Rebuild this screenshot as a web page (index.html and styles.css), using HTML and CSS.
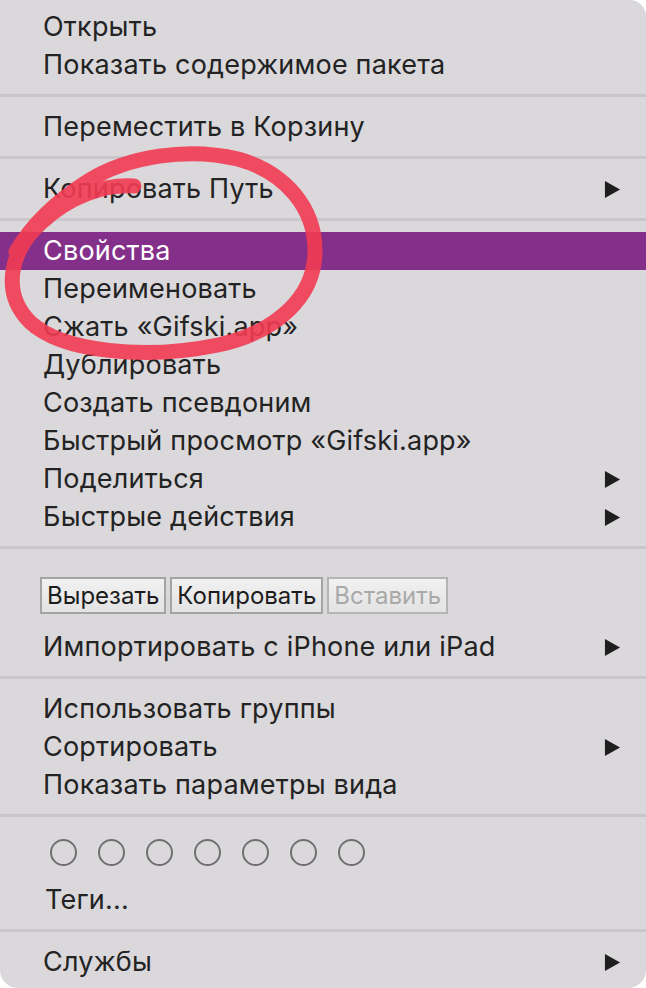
FILE: index.html
```html
<!DOCTYPE html>
<html lang="ru">
<head>
<meta charset="utf-8">
<link rel="stylesheet" href="styles.css">
</head>
<body>
<div class="menu">
  <div class="group">
    <div class="item"><span class="label">Открыть</span></div>
    <div class="item"><span class="label">Показать содержимое пакета</span></div>
  </div>
  <div class="sep"></div>
  <div class="group">
    <div class="item"><span class="label">Переместить в Корзину</span></div>
  </div>
  <div class="sep"></div>
  <div class="group">
    <div class="item"><span class="label">Копировать Путь</span><svg class="arrow" viewBox="0 0 18 20"><path d="M1 1 L17 10 L1 19 Z"/></svg></div>
  </div>
  <div class="sep"></div>
  <div class="group">
    <div class="item active"><span class="label">Свойства</span></div>
    <div class="item"><span class="label">Переименовать</span></div>
    <div class="item"><span class="label">Сжать «Gifski.app»</span></div>
    <div class="item"><span class="label">Дублировать</span></div>
    <div class="item"><span class="label">Создать псевдоним</span></div>
    <div class="item"><span class="label">Быстрый просмотр «Gifski.app»</span></div>
    <div class="item"><span class="label">Поделиться</span><svg class="arrow" viewBox="0 0 18 20"><path d="M1 1 L17 10 L1 19 Z"/></svg></div>
    <div class="item"><span class="label">Быстрые действия</span><svg class="arrow" viewBox="0 0 18 20"><path d="M1 1 L17 10 L1 19 Z"/></svg></div>
  </div>
  <div class="sep"></div>
  <div class="group">
    <div class="buttons">
      <span class="btn">Вырезать</span>
      <span class="btn">Копировать</span>
      <span class="btn disabled">Вставить</span>
    </div>
    <div class="item"><span class="label">Импортировать с iPhone или iPad</span><svg class="arrow" viewBox="0 0 18 20"><path d="M1 1 L17 10 L1 19 Z"/></svg></div>
  </div>
  <div class="sep"></div>
  <div class="group">
    <div class="item"><span class="label">Использовать группы</span></div>
    <div class="item"><span class="label">Сортировать</span><svg class="arrow" viewBox="0 0 18 20"><path d="M1 1 L17 10 L1 19 Z"/></svg></div>
    <div class="item"><span class="label">Показать параметры вида</span></div>
  </div>
  <div class="sep"></div>
  <div class="group">
    <div class="tags">
      <span class="tag"></span><span class="tag"></span><span class="tag"></span><span class="tag"></span><span class="tag"></span><span class="tag"></span><span class="tag"></span>
    </div>
    <div class="item tags-label"><span class="label">Теги...</span></div>
  </div>
  <div class="sep"></div>
  <div class="group">
    <div class="item"><span class="label">Службы</span><svg class="arrow" viewBox="0 0 18 20"><path d="M1 1 L17 10 L1 19 Z"/></svg></div>
  </div>

  <svg class="scribble" viewBox="0 0 646 988" width="646" height="988">
    <path d="M134 186 C105 184 70 196 42 222 C8 252 2 294 30 322 C62 352 145 360 218 345 C278 332 314 296 315 253 C316 208 285 172 238 159 C188 147 128 156 88 181 C58 200 33 222 16 252"/>
  </svg>
</div>
</body>
</html>
```

FILE: styles.css
```css
html, body {
  margin: 0;
  padding: 0;
  background: #ffffff;
}

body {
  width: 646px;
  height: 988px;
  overflow: hidden;
  font-family: Inter, "Liberation Sans", Arial, sans-serif;
  color: #232323;
}

.menu {
  position: relative;
  width: 646px;
  height: 988px;
  box-sizing: border-box;
  padding-top: 8px;
  background: #dad8db;
  border-radius: 0 16px 18px 18px;
  display: flex;
  flex-direction: column;
}

.group {
  display: flex;
  flex-direction: column;
}

.item {
  height: 38px;
  display: flex;
  align-items: center;
  justify-content: space-between;
  padding: 0 25px 0 43px;
  font-size: 27px;
  letter-spacing: 0.2px;
  line-height: 38px;
  white-space: nowrap;
}

.item.active {
  background: #84308a;
  color: #ffffff;
}

.arrow {
  width: 17px;
  height: 19px;
  fill: #1e1e1e;
}

.sep {
  height: 3px;
  margin: 10px 0 11px;
  background: #c9c7ca;
}

.buttons {
  display: flex;
  gap: 4px;
  padding: 17px 0 14px 40px;
}

.btn {
  height: 37px;
  box-sizing: border-box;
  border: 2px solid #a4a4a4;
  background: linear-gradient(#f1f1f1, #e3e3e3);
  font-size: 24px;
  line-height: 33px;
  padding: 0 5px;
  color: #1c1c1c;
}

.btn.disabled {
  color: #a9a9a9;
  border-color: #b4b4b4;
}

.tags {
  display: flex;
  gap: 21px;
  padding: 11px 0 0 50px;
  height: 53px;
  box-sizing: border-box;
}

.tag {
  width: 27px;
  height: 27px;
  box-sizing: border-box;
  border: 2px solid #707070;
  border-radius: 50%;
}

.tags-label {
  padding-left: 45px;
}

.scribble {
  position: absolute;
  left: 0;
  top: 0;
  pointer-events: none;
}

.scribble path {
  fill: none;
  stroke: #f23b52;
  stroke-width: 15;
  stroke-linecap: round;
  stroke-linejoin: round;
  opacity: 0.9;
}
```
